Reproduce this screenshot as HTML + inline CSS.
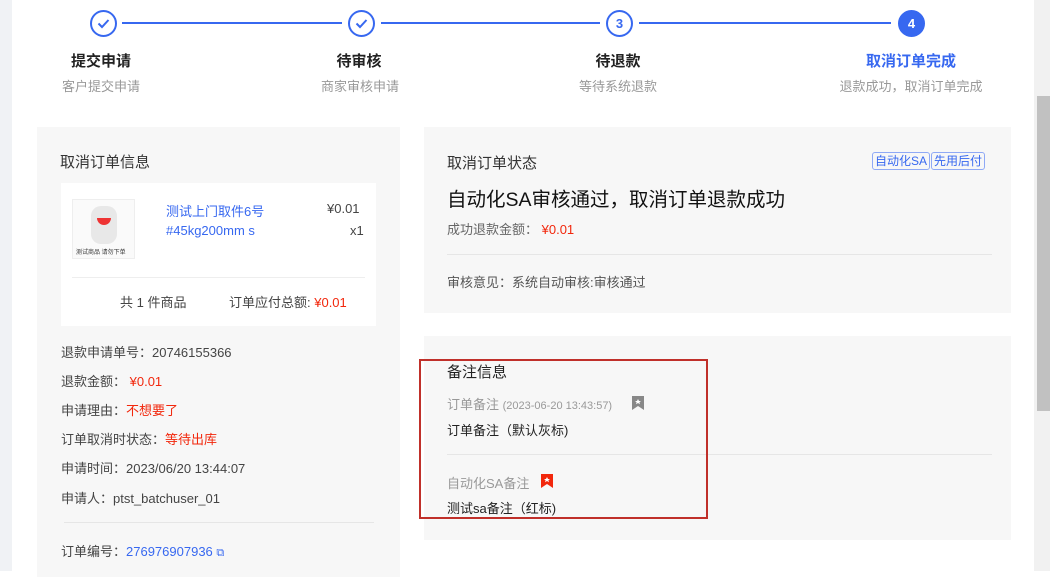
<!DOCTYPE html>
<html><head><meta charset="utf-8"><style>
*{margin:0;padding:0;box-sizing:border-box}
body{width:1050px;height:571px;overflow:hidden;background:#fff;font-family:"Liberation Sans","Noto Sans CJK SC",sans-serif;position:relative;color:#333}
.a{position:absolute}
.circ{position:absolute;width:27px;height:27px;border-radius:50%;border:2px solid #3768f0;top:10px}
.line{position:absolute;height:2px;background:#3768f0;top:22px}
.t{position:absolute;font-size:15px;font-weight:bold;color:#222;text-align:center;width:200px;top:50px}
.s{position:absolute;font-size:13px;color:#999;text-align:center;width:200px;top:76px}
.card{position:absolute;background:#f7f7f7}
.row{position:absolute;left:61px;font-size:13px;color:#444}
.red{color:#f2270c}
.blue{color:#3768f0}
.badge{position:absolute;top:152px;font-size:12px;border:1px solid #8fa9f5;border-radius:3px;padding:0 2px;line-height:16px;color:#3768f0}
</style></head><body>
<div class="a" style="left:0;top:0;width:12px;height:571px;background:#f0f2f5"></div>
<div class="a" style="left:1034px;top:0;width:16px;height:571px;background:#f1f1f1"></div>
<div class="a" style="left:1037px;top:96px;width:13px;height:315px;background:#c1c1c1"></div>

<div class="circ" style="left:90px"><svg width="23" height="23" viewBox="0 0 23 23"><path d="M6.5 11.5l3.5 3.5 6.5-7" fill="none" stroke="#3768f0" stroke-width="2"/></svg></div>
<div class="line" style="left:122px;width:220px"></div>
<div class="circ" style="left:348px"><svg width="23" height="23" viewBox="0 0 23 23"><path d="M6.5 11.5l3.5 3.5 6.5-7" fill="none" stroke="#3768f0" stroke-width="2"/></svg></div>
<div class="line" style="left:381px;width:219px"></div>
<div class="circ" style="left:606px;color:#3768f0;font-size:13px;font-weight:bold;text-align:center;line-height:23px">3</div>
<div class="line" style="left:639px;width:252px"></div>
<div class="circ" style="left:898px;background:#3768f0;color:#fff;font-size:13px;font-weight:bold;text-align:center;line-height:23px">4</div>

<div class="t" style="left:1px">提交申请</div><div class="s" style="left:1px">客户提交申请</div>
<div class="t" style="left:259px">待审核</div><div class="s" style="left:260px">商家审核申请</div>
<div class="t" style="left:518px">待退款</div><div class="s" style="left:518px">等待系统退款</div>
<div class="t" style="left:811px;color:#3768f0">取消订单完成</div><div class="s" style="left:811px">退款成功，取消订单完成</div>

<div class="card" style="left:37px;top:127px;width:363px;height:450px"></div>
<div class="a" style="left:60px;top:151px;font-size:15px;color:#333">取消订单信息</div>
<div class="a" style="left:61px;top:183px;width:315px;height:143px;background:#fff"></div>
<div class="a" style="left:72px;top:199px;width:63px;height:60px;border:1px solid #eee;background:#fafafa">
<div class="a" style="left:18px;top:6px;width:26px;height:38px;background:#e8e8e8;border-radius:10px"></div>
<div class="a" style="left:24px;top:18px;width:14px;height:7px;background:#e33;border-radius:0 0 7px 7px"></div>
<div class="a" style="left:3px;top:47px;font-size:6px;color:#333;white-space:nowrap">测试商品 请勿下单</div></div>
<div class="a blue" style="left:166px;top:201px;font-size:13px">测试上门取件6号</div>
<div class="a blue" style="left:166px;top:223px;font-size:13px">#45kg200mm s</div>
<div class="a" style="left:327px;top:201px;font-size:13px;color:#444">¥0.01</div>
<div class="a" style="left:350px;top:223px;font-size:13px;color:#444">x1</div>
<div class="a" style="left:72px;top:277px;width:293px;height:1px;background:#eee"></div>
<div class="a" style="left:120px;top:292px;font-size:13px;color:#444">共 1 件商品</div>
<div class="a" style="left:229px;top:292px;font-size:13px;color:#444">订单应付总额: <span class="red">¥0.01</span></div>

<div class="row" style="top:342px">退款申请单号：20746155366</div>
<div class="row" style="top:371px">退款金额： <span class="red">¥0.01</span></div>
<div class="row" style="top:400px">申请理由：<span class="red">不想要了</span></div>
<div class="row" style="top:429px">订单取消时状态：<span class="red">等待出库</span></div>
<div class="row" style="top:458px">申请时间：2023/06/20 13:44:07</div>
<div class="row" style="top:488px">申请人：ptst_batchuser_01</div>
<div class="a" style="left:64px;top:522px;width:310px;height:1px;background:#e6e6e6"></div>
<div class="row" style="top:541px">订单编号：<span class="blue">276976907936</span> <span class="blue" style="font-size:11px">⧉</span></div>

<div class="card" style="left:424px;top:127px;width:587px;height:186px"></div>
<div class="a" style="left:447px;top:152px;font-size:15px;color:#333">取消订单状态</div>
<div class="badge" style="left:872px">自动化SA</div>
<div class="badge" style="left:931px">先用后付</div>
<div class="a" style="left:447px;top:183px;font-size:19.5px;color:#111">自动化SA审核通过，取消订单退款成功</div>
<div class="a" style="left:447px;top:219px;font-size:13px;color:#666">成功退款金额： <span class="red">¥0.01</span></div>
<div class="a" style="left:447px;top:254px;width:545px;height:1px;background:#e6e6e6"></div>
<div class="a" style="left:447px;top:272px;font-size:13px;color:#555">审核意见：系统自动审核:审核通过</div>

<div class="card" style="left:424px;top:336px;width:587px;height:204px"></div>
<div class="a" style="left:447px;top:361px;font-size:15px;color:#222">备注信息</div>
<div class="a" style="left:447px;top:394px;font-size:13px;color:#999">订单备注 <span style="font-size:11px">(2023-06-20 13:43:57)</span></div>
<svg class="a" style="left:632px;top:396px" width="12" height="14"><path d="M0 0h12v14l-6-4-6 4z" fill="#888"/><path d="M6 3l1 2h2l-1.6 1.2.6 2L6 7 4 8.2l.6-2L3 5h2z" fill="#fff"/></svg>
<div class="a" style="left:447px;top:420px;font-size:13px;color:#222">订单备注（默认灰标)</div>
<div class="a" style="left:447px;top:454px;width:545px;height:1px;background:#e6e6e6"></div>
<div class="a" style="left:447px;top:473px;font-size:13px;color:#999">自动化SA备注</div>
<svg class="a" style="left:541px;top:474px" width="12" height="14"><path d="M0 0h12v14l-6-4-6 4z" fill="#f2270c"/><path d="M6 3l1 2h2l-1.6 1.2.6 2L6 7 4 8.2l.6-2L3 5h2z" fill="#fff"/></svg>
<div class="a" style="left:447px;top:498px;font-size:13px;color:#222">测试sa备注（红标)</div>
<div class="a" style="left:419px;top:359px;width:289px;height:160px;border:2px solid #c0302a"></div>
</body></html>
